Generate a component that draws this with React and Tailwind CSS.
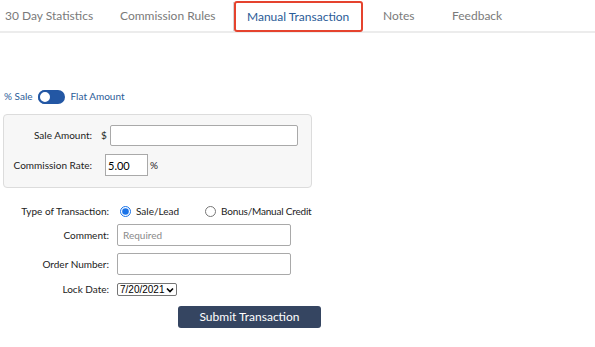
import React, { useState } from "react";

const font = { fontFamily: '"Lato", "Noto Sans", sans-serif' };

function Tabs() {
  return (
    <div className="flex h-[33px] items-stretch border-b-2 border-[#ececec] text-[12px] whitespace-nowrap">
      <div className="w-[115px] pl-[5px] flex items-center text-[#7a7a7a]">30 Day Statistics</div>
      <div className="w-[118px] pl-[5px] flex items-center text-[#7a7a7a]">Commission Rules</div>
      <div className="flex items-stretch border-l border-[#d6d6d6] mt-[2px]">
        <div className="flex items-center pl-[11px] border-2 border-[#e5432e] rounded-[3px] -mt-[1px] -mb-[1px] w-[129px] text-[#2b5c98]">
          Manual Transaction
        </div>
      </div>
      <div className="w-[89px] pl-[20px] flex items-center text-[#7a7a7a]">Notes</div>
      <div className="flex items-center text-[#7a7a7a]">Feedback</div>
    </div>
  );
}

function Toggle() {
  return (
    <div className="flex items-center text-[10px] text-[#2b5c98] pl-[4px] mt-[56px]">
      <span>% Sale</span>
      <span className="relative ml-[5px] mr-[6px] inline-block h-[14px] w-[27px] rounded-full bg-[#2357a4]">
        <span className="absolute left-0 top-0 h-[14px] w-[14px] rounded-full border-2 border-[#2357a4] bg-white"></span>
      </span>
      <span>Flat Amount</span>
    </div>
  );
}

export default function App() {
  const [type, setType] = useState("sale");
  return (
    <div className="w-[595px] h-[347px] bg-white overflow-hidden" style={font}>
      <Tabs />
      <Toggle />

      {/* Amount box */}
      <div className="ml-[3px] mt-[10px] w-[309px] h-[74px] rounded-[4px] border border-[#dcdcdc] bg-[#f7f7f7] text-[10px] text-[#222] pt-[10px]">
        <div className="flex items-center h-[21px]">
          <div className="w-[88px] text-right">Sale Amount:</div>
          <span className="ml-[9px] mr-[3px]">$</span>
          <input className="h-[21px] w-[188px] border border-[#a9a9a9] rounded-[2px] bg-white" />
        </div>
        <div className="flex items-center h-[22px] mt-[8px]">
          <div className="w-[88px] text-right">Commission Rate:</div>
          <input
            defaultValue="5.00"
            className="ml-[13px] h-[22px] w-[43px] border border-[#a9a9a9] bg-white px-[2px] text-[11px] text-black"
          />
          <span className="ml-[2px]">%</span>
        </div>
      </div>

      {/* Transaction form */}
      <div className="mt-[15px] text-[10px] text-[#222]">
        <div className="flex items-center h-[16px]">
          <div className="w-[109px] text-right">Type of Transaction:</div>
          <label className="flex items-center ml-[11px]">
            <input
              type="radio"
              checked={type === "sale"}
              onChange={() => setType("sale")}
              className="m-0 h-[11px] w-[11px] accent-[#1a73e8]"
            />
            <span className="ml-[5px]">Sale/Lead</span>
          </label>
          <label className="flex items-center ml-[26px]">
            <input
              type="radio"
              checked={type === "bonus"}
              onChange={() => setType("bonus")}
              className="m-0 h-[11px] w-[11px]"
            />
            <span className="ml-[5px] tracking-[-0.2px]">Bonus/Manual Credit</span>
          </label>
        </div>
        <div className="flex items-center mt-[5px]">
          <div className="w-[109px] text-right">Comment:</div>
          <input
            placeholder="Required"
            className="ml-[8px] h-[22px] w-[174px] border border-[#a9a9a9] rounded-[2px] px-[5px] text-[10px] placeholder:text-[#8a8a8a]"
          />
        </div>
        <div className="flex items-center mt-[7px]">
          <div className="w-[109px] text-right">Order Number:</div>
          <input className="ml-[8px] h-[22px] w-[174px] border border-[#a9a9a9] rounded-[2px]" />
        </div>
        <div className="flex items-center mt-[7px]">
          <div className="w-[109px] text-right">Lock Date:</div>
          <div
            className="ml-[8px] flex h-[13px] w-[60px] items-center justify-between border border-[#767676] rounded-[2px] pl-[2px] pr-[2px] text-[10px] text-black"
            style={{ fontFamily: '"Liberation Sans", Arial, sans-serif' }}
          >
            <span>7/20/2021</span>
            <svg width="8" height="6" viewBox="0 0 8 6">
              <path d="M1 1.5 L4 4.5 L7 1.5" fill="none" stroke="#000" strokeWidth="1.6" />
            </svg>
          </div>
        </div>
        <div className="flex mt-[9px]">
          <button className="ml-[178px] h-[22px] w-[143px] rounded-[3px] bg-[#354561] text-[12px] text-white">
            Submit Transaction
          </button>
        </div>
      </div>
    </div>
  );
}
